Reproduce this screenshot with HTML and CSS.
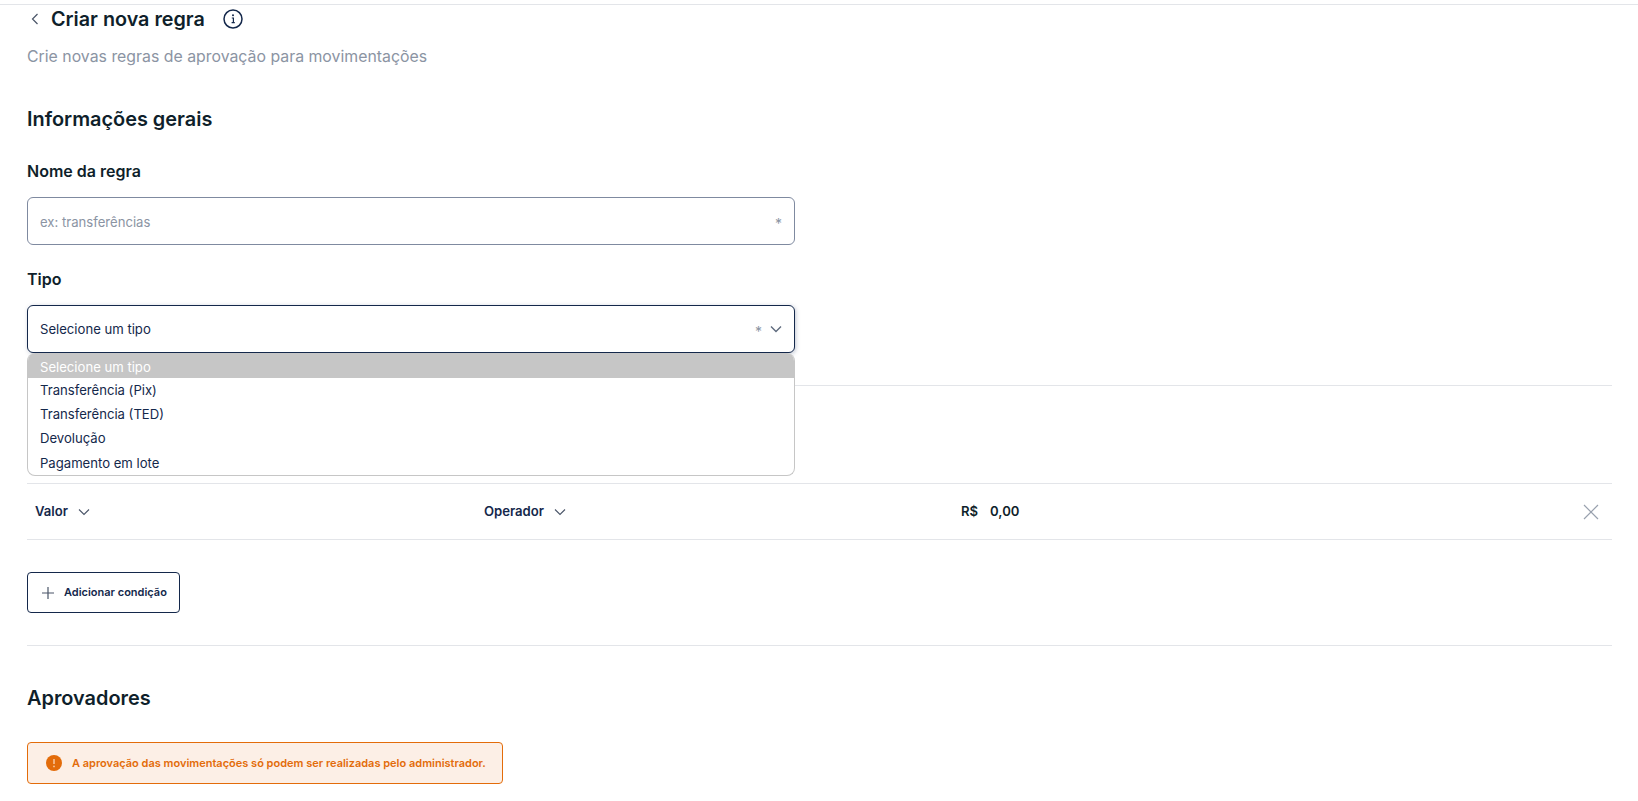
FILE: index.html
```html
<!DOCTYPE html>
<html lang="pt-BR">
<head>
<meta charset="utf-8">
<title>Criar nova regra</title>
<link rel="stylesheet" href="styles.css">
</head>
<body>
<main class="page">
  <header class="page-head">
    <div class="title-row">
      <svg class="back" width="10" height="14" viewBox="0 0 10 14"><path d="M7.5 2 2.5 7l5 5" fill="none" stroke="#4a5568" stroke-width="1.2"/></svg>
      <h1 class="title">Criar nova regra</h1>
      <svg class="info" width="20" height="20" viewBox="0 0 20 20"><circle cx="10" cy="10" r="9" fill="none" stroke="#14284b" stroke-width="1.5"/><circle cx="10" cy="6.3" r="1" fill="#14284b"/><path d="M8.8 9h1.6v4.4M8.6 13.6h3.2" fill="none" stroke="#14284b" stroke-width="1.2"/></svg>
    </div>
    <p class="subtitle">Crie novas regras de aprovação para movimentações</p>
  </header>

  <section class="general">
    <h2 class="section-title">Informações gerais</h2>
    <label class="field-label label-name">Nome da regra</label>
    <div class="field">
      <span class="placeholder">ex: transferências</span>
      <span class="req">*</span>
    </div>
    <label class="field-label label-type">Tipo</label>
    <div class="select-wrap">
      <div class="field field-open">
        <span class="value">Selecione um tipo</span>
        <span class="req">*</span>
        <svg class="select-chevron" width="12" height="8" viewBox="0 0 12 8"><path d="M1 1.5 6 6.5l5-5" fill="none" stroke="#5f6b7e" stroke-width="1.4"/></svg>
      </div>
      <ul class="dropdown">
        <li class="option option-active">Selecione um tipo</li>
        <li class="option">Transferência (Pix)</li>
        <li class="option">Transferência (TED)</li>
        <li class="option">Devolução</li>
        <li class="option">Pagamento em lote</li>
      </ul>
    </div>
  </section>

  <section class="conditions">
    <div class="cond-row">
      <div class="cond-col cond-field">
        <span class="cond-text">Valor</span>
        <svg width="12" height="8" viewBox="0 0 12 8"><path d="M1 1.5 6 6.5l5-5" fill="none" stroke="#4a5568" stroke-width="1.1"/></svg>
      </div>
      <div class="cond-col cond-operator">
        <span class="cond-text">Operador</span>
        <svg width="12" height="8" viewBox="0 0 12 8"><path d="M1 1.5 6 6.5l5-5" fill="none" stroke="#4a5568" stroke-width="1.1"/></svg>
      </div>
      <div class="cond-col cond-amount">
        <span class="cond-text">R$</span>
        <span class="cond-value">0,00</span>
      </div>
      <svg class="remove" width="16" height="16" viewBox="0 0 16 16"><path d="M1 1l14 14M15 1 1 15" fill="none" stroke="#99a1ae" stroke-width="1.2"/></svg>
    </div>
    <button class="add-btn" type="button">
      <svg width="12" height="12" viewBox="0 0 12 12"><path d="M6 0v12M0 6h12" fill="none" stroke="#4a5568" stroke-width="1.2"/></svg>
      <span class="add-label">Adicionar condição</span>
    </button>
  </section>

  <section class="approvers">
    <h2 class="section-title">Aprovadores</h2>
    <div class="alert">
      <svg class="alert-icon" width="16" height="16" viewBox="0 0 16 16"><circle cx="8" cy="8" r="8" fill="#e36c0a"/><path d="M8 4v5" stroke="#f8c9a0" stroke-width="1.5"/><circle cx="8" cy="11.4" r=".9" fill="#f8c9a0"/></svg>
      <span>A aprovação das movimentações só podem ser realizadas pelo administrador.</span>
    </div>
  </section>
</main>
</body>
</html>
```

FILE: styles.css
```css
* { box-sizing: border-box; }
html, body { margin: 0; padding: 0; background: #fff; overflow: hidden; }
body { font-family: Inter, "Liberation Sans", sans-serif; color: #0f1f2b; height: 801px; }
.page { margin-top: 4px; border-top: 1px solid #e3e5e9; padding: 0 26px 0 27px; }

.title-row { display: flex; align-items: center; height: 28px; padding-left: 3px; }
.back { margin-right: 11px; }
.title { margin: 0; font-size: 19.75px; line-height: 28px; font-weight: 600; color: #0f1f2b; }
.info { margin-left: 18px; }
.subtitle { margin: 13px 0 0; font-size: 15.85px; line-height: 22px; color: #8b94a3; }

.section-title { margin: 0; font-size: 19.9px; line-height: 28px; font-weight: 600; color: #0f1f2b; }
.general .section-title { margin-top: 37px; }

.field-label { display: block; font-size: 16px; line-height: 22px; font-weight: 600; color: #0f1f2b; }
.label-name { margin-top: 27px; margin-bottom: 15px; }
.label-type { margin-top: 23px; margin-bottom: 15px; }

.field { width: 768px; height: 48px; border: 1px solid #7f8aa0; border-radius: 6px; padding: 0 12px; display: flex; align-items: center; font-size: 13.12px; background: #fff; }
.placeholder { color: #8b94a3; flex: 1; padding-top: 1px; }
.value { color: #14284b; flex: 1; }
.req { color: #8b94a3; font-size: 14px; line-height: 14px; padding-top: 6px; }
.field-open { border-color: #14284b; box-shadow: 1px 1px 4px rgba(80, 95, 130, .35); }
.select-chevron { margin-left: 8px; }

.select-wrap { position: relative; width: 768px; }
.dropdown { position: absolute; top: 48px; left: 0; width: 768px; height: 123px; margin: 0; padding: 0; list-style: none; background: #fff; border: 1px solid #c6c6c6; border-top: 0; border-radius: 8px; overflow: hidden; z-index: 2; }
.option { height: 24.2px; line-height: 25px; padding-left: 12px; font-size: 13.12px; color: #14284b; }
.option-active { height: 25px; line-height: 28px; background: #c6c6c6; color: #fff; }

.conditions { margin-top: 32px; border-top: 1px solid #e3e5e9; padding-top: 97px; padding-bottom: 32px; border-bottom: 1px solid #e3e5e9; }
.cond-row { display: flex; align-items: center; height: 57px; border-top: 1px solid #e3e5e9; border-bottom: 1px solid #e3e5e9; position: relative; padding-left: 8px; }
.cond-col { display: flex; align-items: center; gap: 10px; font-size: 13.12px; font-weight: 600; color: #14284b; }
.cond-text, .cond-value { padding-bottom: 2px; }
.cond-field { width: 449px; }
.cond-operator { width: 477px; }
.cond-amount { flex: 1; gap: 12px; color: #0f1f2b; }
.remove { margin-right: 13px; }

.add-btn { display: flex; align-items: center; gap: 10px; margin-top: 32px; width: 153px; height: 41px; padding: 0 0 0 14px; border: 1px solid #14284b; border-radius: 4px; background: #fff; font-family: inherit; font-size: 11px; font-weight: 600; color: #14284b; white-space: nowrap; }
.add-label { padding-bottom: 2px; }

.approvers .section-title { margin-top: 38px; }
.alert { display: flex; align-items: center; gap: 10px; margin-top: 30px; width: 476px; height: 42px; padding: 0 0 0 18px; background: #fcefe6; border: 1px solid #e36c0a; border-radius: 4px; font-size: 11px; font-weight: 600; color: #e36c0a; white-space: nowrap; }
.alert-icon { flex-shrink: 0; }
```
